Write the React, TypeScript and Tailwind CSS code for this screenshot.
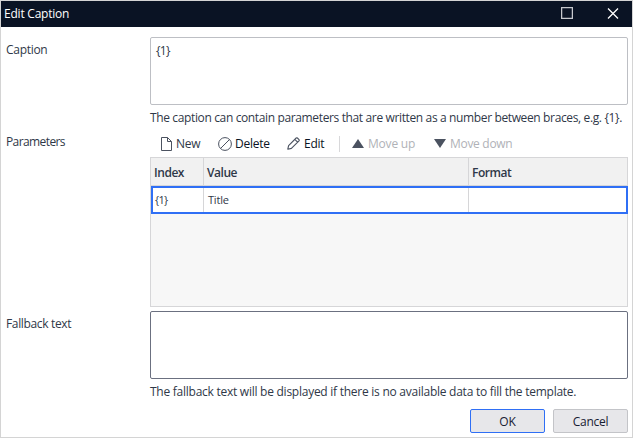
import type { ReactNode } from "react";

function Field({ label, className, children }: { label: ReactNode; className: string; children: ReactNode }) {
  return (
    <section className={`flex ${className}`}>
      <div className="w-[149px] shrink-0 pl-[5px] pt-[5px] leading-4">{label}</div>
      <div className="w-[478px]">{children}</div>
    </section>
  );
}

function FileIcon() {
  return (
    <svg width="11" height="14" viewBox="0 0 11 14" fill="none" stroke="#4b5260">
      <path d="M.5.5h6l4 4v9H.5zM6.5.5v4h4" />
    </svg>
  );
}

function BlockIcon() {
  return (
    <svg width="14" height="14" viewBox="0 0 14 14" fill="none" stroke="#4b5260">
      <circle cx="7" cy="7" r="6.4" />
      <path d="M2.5 11.5l9-9" />
    </svg>
  );
}

function PencilIcon() {
  return (
    <svg width="13" height="13" viewBox="0 0 13 13" fill="none" stroke="#4b5260" strokeWidth="1.1" strokeLinejoin="round">
      <path d="M.8 12.2L1.6 8.6 9.2 1q.6-.6 1.2 0l1.6 1.6q.6.6 0 1.2L4.4 11.4zM7.8 2.4l2.8 2.8" />
    </svg>
  );
}

export default function App() {
  return (
    <main className="flex h-[438px] w-[633px] flex-col overflow-hidden border border-[#d4d4d4] bg-white font-['Open_Sans','Noto_Sans',sans-serif] text-[12px] text-[#2f3848]">
      <header className="flex h-[26px] shrink-0 items-center bg-[#0a1324] text-white">
        <h1 className="w-[560px] pl-[3px] leading-4 tracking-[-0.22px]">Edit Caption</h1>
        <svg className="mb-[2px]" width="12" height="12" viewBox="0 0 12 12" fill="none" stroke="#c6c8cd" strokeWidth="1.3"><path d="M.6.6h10.8v10.8H.6z" /></svg>
        <svg className="mb-px ml-[34px]" width="12" height="11" viewBox="0 0 12 11" stroke="#fff" strokeWidth="1.3"><path d="M1 .5l10 10M11 .5l-10 10" /></svg>
      </header>

      <Field label={<span className="tracking-[-0.3px]">Caption</span>} className="mt-[10px] h-[92px]">
        <div className="h-[68px] rounded-[2px] border border-[#bdbfc4] px-[5px] pt-[5px] leading-4 tracking-[-0.7px]">{"{1}"}</div>
        <p className="mt-[5px] whitespace-nowrap leading-4 tracking-[-0.365px]">
          The caption can contain parameters that are written as a number between braces, e.g. {"{1}"}.
        </p>
      </Field>

      <Field label={<span className="tracking-[-0.6px]">Parameters</span>} className="h-[178px]">
        <div className="flex h-[28px] items-center pt-px leading-4">
          <span className="flex w-[68px] items-center gap-[4px] pl-[11px] tracking-[-0.2px]"><FileIcon />New</span>
          <span className="flex w-[69px] items-center gap-[3px] tracking-[-0.25px] text-[#0a1324]"><BlockIcon />Delete</span>
          <span className="flex w-[52px] items-center gap-[4px] tracking-[-0.25px] text-[#0a1324]"><PencilIcon />Edit</span>
          <i className="mr-[13px] h-4 w-px bg-[#d8d8da]" />
          <span className="flex w-[82px] items-center gap-[4px] whitespace-nowrap tracking-[-0.2px] text-[#b0b2b7]">
            <svg className="-ml-px" width="12" height="9" fill="#4b5260"><path d="M0 9L6 0l6 9z" /></svg>Move up
          </span>
          <span className="flex items-center gap-[4px] whitespace-nowrap tracking-[-0.3px] text-[#b0b2b7]">
            <svg className="-ml-px" width="12" height="9" fill="#4b5260"><path d="M0 0L6 9l6-9z" /></svg>Move down
          </span>
        </div>
        <div className="h-[150px] border border-[#d6d6d8] bg-[#f7f7f7]">
          <div className="grid h-[28px] grid-cols-[53px_265px_1fr] border-b border-[#d6d6d8] bg-[#f1f1f1] font-semibold leading-[29px] tracking-[-0.45px]">
            <span className="h-[27px] border-r border-[#d6d6d8] pl-[3px]">Index</span>
            <span className="h-[27px] border-r border-[#d6d6d8] pl-[3px]">Value</span>
            <span className="h-[27px] pl-[3px]">Format</span>
          </div>
          <div className="mr-[-1px] grid h-[28px] grid-cols-[51px_265px_1fr] border-2 border-[#2f6ff5] bg-white text-[11px] leading-[24px]">
            <span className="border-r border-[#d6d6d8] pl-[2px] tracking-[-0.7px]">{"{1}"}</span>
            <span className="border-r border-[#d6d6d8] pl-[4px] tracking-[-0.2px]">Title</span>
            <span />
          </div>
        </div>
      </Field>

      <Field label={<span className="tracking-[-0.35px]">Fallback text</span>} className="mt-[4px] h-[98px]">
        <div className="h-[68px] rounded-[2px] border border-[#6b7080]" />
        <p className="mt-[5px] whitespace-nowrap leading-4 tracking-[-0.255px]">
          The fallback text will be displayed if there is no available data to fill the template.
        </p>
      </Field>

      <footer className="flex justify-end gap-2 pr-[4px] text-[#172033]">
        <button className="h-6 w-[75px] rounded-[2px] border border-[#2f6ff5] bg-[#e7e7ea] pt-px leading-[22px] tracking-[-0.2px]">OK</button>
        <button className="h-6 w-[75px] rounded-[2px] border border-[#c3c4c8] bg-[#e7e7ea] pt-px leading-[22px] tracking-[-0.3px]">Cancel</button>
      </footer>
    </main>
  );
}
